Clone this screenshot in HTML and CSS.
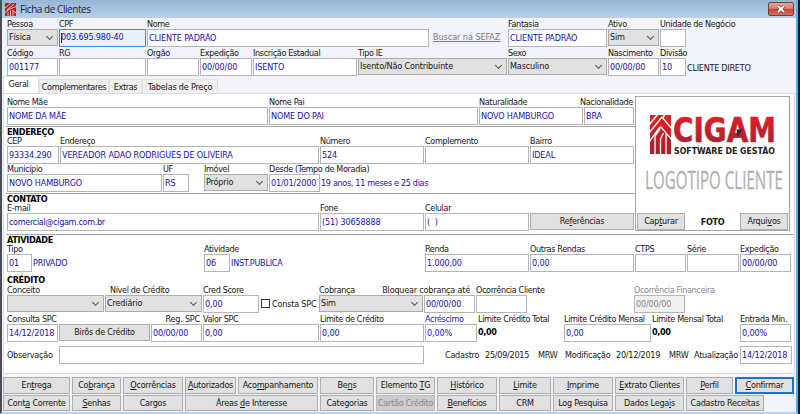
FILE: index.html
```html
<!DOCTYPE html>
<html lang="pt-BR">
<head>
<meta charset="utf-8">
<title>Ficha de Clientes</title>
<link rel="stylesheet" href="styles.css">
</head>
<body>
<div class="window">
  <header class="titlebar">
    <svg class="appicon" viewBox="0 0 11 13"><rect width="11" height="13" fill="#c5161d"/><path d="M0 5 6 0M2 7 9 1M0 9.500 4 6.500 6 5.500 11 3.500M3 13V9M5.500 13V7.500M8 13V8M7 7 11 10" fill="none" stroke="#e8d5df" stroke-width=".9"/></svg>
    <h1>Ficha de Clientes</h1>
    <button class="close" aria-label="Fechar"><svg viewBox="0 0 10 8"><path d="M2 1l6 6M8 1L2 7" stroke="#6a3a3a" stroke-width="3.200"/><path d="M2 1l6 6M8 1L2 7" stroke="#fff" stroke-width="2"/></svg></button>
  </header>

  <section class="head">
    <div class="row r-id">
      <div class="f"><label>Pessoa</label><div class="box sel">Física</div></div>
      <div class="f"><label>CPF</label><div class="box focus num"><i class="caret"></i>003.695.980-40</div></div>
      <div class="f"><label>Nome</label><div class="box up">CLIENTE PADRÃO</div></div>
      <div class="f"><label>&nbsp;</label><a class="link">Buscar na SEFAZ</a></div>
      <div class="f"><label>Fantasia</label><div class="box up">CLIENTE PADRÃO</div></div>
      <div class="f"><label>Ativo</label><div class="box sel">Sim</div></div>
      <div class="f"><label>Unidade de Negócio</label><div class="box"></div></div>
    </div>
    <div class="row r-doc">
      <div class="f"><label>Código</label><div class="box num">001177</div></div>
      <div class="f"><label>RG</label><div class="box"></div></div>
      <div class="f"><label>Orgão</label><div class="box"></div></div>
      <div class="f"><label>Expedição</label><div class="box num">00/00/00</div></div>
      <div class="f"><label>Inscrição Estadual</label><div class="box up">ISENTO</div></div>
      <div class="f"><label>Tipo IE</label><div class="box sel">Isento/Não Contribuinte</div></div>
      <div class="f"><label>Sexo</label><div class="box sel">Masculino</div></div>
      <div class="f"><label>Nascimento</label><div class="box num">00/00/00</div></div>
      <div class="f"><label>Divisão</label><div class="box num">10</div></div>
      <div class="f"><label>&nbsp;</label><div class="note dark up">CLIENTE DIRETO</div></div>
    </div>
    <nav class="tabs"><span class="tab on">Geral</span><span class="tab t2">Complementares</span><span class="tab t3">Extras</span><span class="tab t4">Tabelas de Preço</span></nav>
  </section>

  <main class="panel">
    <div class="upper">
      <div class="left">
        <div class="row r-par">
          <div class="f"><label>Nome Mãe</label><div class="box up">NOME DA MÃE</div></div>
          <div class="f"><label>Nome Pai</label><div class="box up">NOME DO PAI</div></div>
          <div class="f"><label>Naturalidade</label><div class="box up">NOVO HAMBURGO</div></div>
          <div class="f"><label class="pull">Nacionalidade</label><div class="box up">BRA</div></div>
        </div>
        <h2 class="line">ENDEREÇO</h2>
        <div class="row r-end">
          <div class="f"><label>CEP</label><div class="box num">93334.290</div></div>
          <div class="f"><label>Endereço</label><div class="box up">VEREADOR ADAO RODRIGUES DE OLIVEIRA</div></div>
          <div class="f"><label>Número</label><div class="box num">524</div></div>
          <div class="f"><label>Complemento</label><div class="box"></div></div>
          <div class="f"><label>Bairro</label><div class="box up">IDEAL</div></div>
        </div>
        <div class="row r-mun">
          <div class="f"><label>Município</label><div class="box up">NOVO HAMBURGO</div></div>
          <div class="f"><label>UF</label><div class="box up">RS</div></div>
          <span></span>
          <div class="f"><label>Imóvel</label><div class="box sel">Próprio</div></div>
          <div class="f"><label>Desde (Tempo de Moradia)</label><div class="box num">01/01/2000</div></div>
          <div class="f"><label>&nbsp;</label><div class="note mid tight">19 anos, 11 meses e 25 dias</div></div>
        </div>
        <h2 class="line">CONTATO</h2>
        <div class="row r-con">
          <div class="f"><label>E-mail</label><div class="box tight">comercial@cigam.com.br</div></div>
          <div class="f"><label>Fone</label><div class="box num">(51) 30658888</div></div>
          <div class="f"><label>Celular</label><div class="box">( &nbsp;)</div></div>
          <div class="f"><label>&nbsp;</label><button class="btn in">Re<u>f</u>erências</button></div>
        </div>
      </div>
      <aside class="photo">
        <div class="logo">
          <svg viewBox="0 0 126 92">
            <defs><linearGradient id="g" x1="0" y1="0" x2="0" y2="1"><stop offset="0" stop-color="#ee1c25"/><stop offset="1" stop-color="#9c2430"/></linearGradient></defs>
            <rect x="0" y="0" width="21" height="39" fill="url(#g)"/>
            <path d="M-1 10 8 -1M-1 18 12 2 22 14M-1 27 10 12M8 15l3-3 11 13M5 40V21M10.500 40V24M16 40V19M13 3l2-4M5 21l5-7M10.500 24l3-6" fill="none" stroke="#fff" stroke-width="1.300"/>
            <text class="brand" x="23" y="27" textLength="103" lengthAdjust="spacingAndGlyphs">CIGAM</text>
            <path d="M86.500 14.500h6l-5 7.500z" fill="#2a2a2a"/>
            <text class="sub" x="24" y="39" textLength="101" lengthAdjust="spacingAndGlyphs">SOFTWARE DE GESTÃO</text>
            <text class="client" x="-5" y="74" textLength="138" lengthAdjust="spacingAndGlyphs">LOGOTIPO CLIENTE</text>
          </svg>
        </div>
        <div class="photobar"><button class="btn in">Cap<u>t</u>urar</button><b>FOTO</b><button class="btn in">Arqui<u>v</u>os</button></div>
      </aside>
    </div>

    <h2 class="line">ATIVIDADE</h2>
    <div class="row r-ati">
      <div class="f"><label>Tipo</label><div class="box num">01</div></div>
      <div class="f"><label>&nbsp;</label><div class="note mid up">PRIVADO</div></div>
      <div class="f"><label>Atividade</label><div class="box num">06</div></div>
      <div class="f"><label>&nbsp;</label><div class="note mid up">INST.PUBLICA</div></div>
      <div class="f"><label>Renda</label><div class="box num">1.000,00</div></div>
      <div class="f"><label>Outras Rendas</label><div class="box num">0,00</div></div>
      <div class="f"><label>CTPS</label><div class="box"></div></div>
      <div class="f"><label>Série</label><div class="box"></div></div>
      <div class="f"><label>Expedição</label><div class="box num">00/00/00</div></div>
    </div>
    <h2 class="plain">CRÉDITO</h2>
    <div class="row r-cre">
      <div class="f"><label>Conceito</label><div class="box sel"></div></div>
      <div class="f"><label class="ind">Nível de Crédito</label><div class="box sel">Crediário</div></div>
      <div class="f"><label>Cred Score</label><div class="box num">0,00</div></div>
      <div class="f"><label>&nbsp;</label><div class="check"><i></i>Consta SPC</div></div>
      <div class="f"><label>Cobrança</label><div class="box sel">Sim</div></div>
      <div class="f"><label class="end">Bloquear cobrança até</label><div class="box num">00/00/00</div></div>
      <div class="f"><label>Ocorrência Cliente</label><div class="box"></div></div>
      <span></span>
      <div class="f off"><label>Ocorrência Financeira</label><div class="box num">00/00/00</div></div>
    </div>
    <div class="row r-spc">
      <div class="f"><label>Consulta SPC</label><div class="box num date">14/12/2018</div></div>
      <div class="f"><label>&nbsp;</label><button class="btn in">Birôs de Crédito</button></div>
      <div class="f"><label class="end reg">Reg. SPC</label><div class="box num">00/00/00</div></div>
      <div class="f"><label>Valor SPC</label><div class="box num">0,00</div></div>
      <div class="f"><label>Limite de Crédito</label><div class="box num">0,00</div></div>
      <div class="f blue"><label>Acréscimo</label><div class="box num">0,00%</div></div>
      <div class="f"><label>Limite Crédito Total</label><b class="val">0,00</b></div>
      <div class="f"><label>Limite Crédito Mensal</label><div class="box num">0,00</div></div>
      <div class="f"><label>Limite Mensal Total</label><b class="val">0,00</b></div>
      <div class="f"><label>Entrada Mín.</label><div class="box num">0,00%</div></div>
    </div>
    <div class="obs">
      <span>Observação</span><div class="box"></div><span>Cadastro</span><span class="num">25/09/2015</span><span>MRW</span><span>Modificação</span><span class="num">20/12/2019</span><span>MRW</span><span>Atualização</span><div class="box num date">14/12/2018</div>
    </div>
  </main>

  <footer>
    <div class="btns b1">
      <button class="btn">En<u>t</u>rega</button><button class="btn">Co<u>b</u>rança</button><button class="btn"><u>O</u>corrências</button><button class="btn"><u>A</u>utorizados</button><button class="btn">Aco<u>m</u>panhamento</button><button class="btn">Be<u>n</u>s</button><button class="btn">Elemento <u>T</u>G</button><button class="btn"><u>H</u>istórico</button><button class="btn"><u>L</u>imite</button><button class="btn"><u>I</u>mprime</button><button class="btn"><u>E</u>xtrato Clientes</button><button class="btn"><u>P</u>erfil</button><button class="btn ok"><u>C</u>onfirmar</button>
    </div>
    <div class="btns b2">
      <button class="btn">Cont<u>a</u> Corrente</button><button class="btn"><u>S</u>enhas</button><button class="btn">Cargos</button><button class="btn">Áreas <u>d</u>e Interesse</button><button class="btn">Categorias</button><button class="btn dis">Cartão Crédito</button><button class="btn"><u>B</u>enefícios</button><button class="btn">CRM</button><button class="btn">Log Pesquisa</button><button class="btn">Dados Lega<u>i</u>s</button><button class="btn">Cadastro Receitas</button>
    </div>
  </footer>
</div>
</body>
</html>
```

FILE: styles.css
```css
* { box-sizing: border-box; margin: 0; padding: 0; }
body {
  width: 800px; height: 414px; overflow: hidden; background: #0b1c3c;
  font: 9px/10px "DejaVu Sans Condensed", "DejaVu Sans", sans-serif; font-stretch: condensed;
  letter-spacing: -.35px; color: #161616; white-space: nowrap;
}
.window {
  width: 798px; height: 414px; background: #f2f3fa;
  border-left: 2px solid #4b4d55; border-right: 2px solid #53b4e2; border-bottom: 2px solid #b9d1ea;
}
.titlebar {
  display: flex; align-items: center; height: 18px; padding: 0 2px 0 3px;
  background: linear-gradient(#98b5d5, #b9d0e9);
}
.appicon { width: 11px; height: 13px; }
.titlebar h1 { flex: 1; margin-left: 4px; font: 10px/18px "Open Sans", "Noto Sans", sans-serif; color: #1c2430; letter-spacing: -.45px; }
.close {
  width: 26px; height: 14px; margin-top: -1px; border: 1px solid #6d4347; border-radius: 2px;
  background: linear-gradient(#e3a798, #d68171 45%, #bf4634 50%, #d1705b);
}
.close svg { display: block; width: 10px; height: 8px; margin: auto; }

.head { height: 75px; padding: 1px 0 0 5px; }
.row { display: grid; height: 28px; }
.f { margin-right: 1px; min-width: 0; }
label { display: block; height: 10px; }
.box {
  height: 18px; padding: 0 2px 0 1px; border: 1px solid #b2b5bb; background: #fff;
  line-height: 17px; color: #1a11a8; letter-spacing: -.15px; overflow: hidden;
}
.sel {
  position: relative; height: 17px; background: #e1e1e1; border-color: #adadad; color: #161616; line-height: 15px;
}
.sel::after {
  content: ""; position: absolute; right: 5px; top: 4px; width: 4px; height: 4px;
  border: solid #555; border-width: 0 1px 1px 0; transform: rotate(45deg);
}
.focus { border-color: #2f8fdd; background: #e5f1fd; line-height: 15px; }
.caret { display: inline-block; width: 1px; height: 10px; margin-right: -1px; background: #222; vertical-align: middle; }
.link { margin-left: 3px; color: #7d7d7d; line-height: 17px; letter-spacing: -.05px; text-decoration: underline; }
.note { line-height: 21px; letter-spacing: -.25px; }
.mid { line-height: 18px; color: #1a11a8; }
.tight { letter-spacing: -.33px; }
.date { padding: 0 0 0 1px; }
.val { line-height: 17px; color: #000; }
.r-id { grid-template-columns: 52px 88px 283px 78px 100px 52px 27px; }
.r-doc { grid-template-columns: 52px 88px 53px 53px 105px 150px 100px 52px 27px 80px; margin-top: 1px; }

.tabs { display: flex; align-items: flex-end; height: 17px; margin-left: -4px; }
.tab { height: 14px; border: 1px solid #e0e0e0; border-bottom: 0; background: #f0f0f0; text-align: center; line-height: 14px; }
.on { width: 36px; height: 17px; padding-right: 5px; background: #fff; }
.t2 { width: 70px; }
.t3 { width: 33px; }
.t4 { width: 76px; letter-spacing: -.2px; }

.panel { height: 281px; margin: 0 1px 0 1px; padding: 0 0 0 3px; background: #fff; border: 1px solid #dcdde2; }
.upper { display: flex; height: 140px; }
.left { width: 628px; padding-top: 3px; }
h2 { height: 10px; font-size: 9px; line-height: 11px; font-weight: bold; letter-spacing: -.3px; color: #000; }
.line { margin: 0 0 0 -1px; padding-left: 1px; border-top: 1px solid #a7a7a7; }
.left .line { margin-top: 1px; }
.plain { margin-top: 3px; line-height: 11px; }
.r-par { grid-template-columns: 262px 210px 105px 51px; }
.pull { margin-left: -4px; }
.r-end { grid-template-columns: 53px 260px 105px 105px 105px; }
.r-mun { grid-template-columns: 156px 27px 14px 65px 52px 120px; }
.r-con { grid-template-columns: 313px 105px 105px 105px; }
.photo { width: 155px; height: 135px; margin-top: 2px; border: 1px solid #a7a7a7; display: flex; flex-direction: column; }
.logo { flex: 1; padding: 18px 0 0 14px; }
.logo svg { display: block; width: 126px; height: 92px; overflow: visible; }
.brand { font: bold 34px "DejaVu Sans", sans-serif; letter-spacing: 0; fill: url(#g); stroke: url(#g); stroke-width: .6px; }
.sub { font: bold 8.500px "DejaVu Sans", sans-serif; letter-spacing: 0; fill: #222; }
.client { font: 25px "Open Sans", sans-serif; letter-spacing: 0; fill: #b0b0b0; stroke: #b0b0b0; stroke-width: .3px; }
.photobar { display: flex; justify-content: space-between; align-items: center; padding: 0 1px; }
.photobar .btn { width: 48px; }
.r-ati { grid-template-columns: 26px 171px 27px 194px 105px 105px 52px 53px 52px; }
.r-cre { grid-template-columns: 98px 98px 57px 59px 105px 52px 52px 106px 52px; height: 28.500px; }
.r-spc { grid-template-columns: 52px 92px 52px 117px 105px 53px 86px 88px 88px 52px; }
.ind { padding-left: 5px; }
.end { display: flex; justify-content: flex-end; padding-right: 5px; letter-spacing: -.2px; }
.reg { padding-right: 2px; }
.check { display: flex; align-items: center; height: 17px; gap: 2px; padding-left: 1px; letter-spacing: -.2px; }
.check i { width: 9px; height: 9px; border: 1px solid #333; }
.off { color: #888; }
.off .box { background: #f0f0f0; color: #888; }
.blue, .blue .box { color: #1414ff; }
.obs { display: grid; grid-template-columns: 52px 386px 40px 53px 27px 51px 53px 25px 46px 52px; line-height: 18px; margin-top: 4px; letter-spacing: -.25px; }
.obs div:nth-child(2) { width: 365px; }

.btn {
  height: 17px; border: 1px solid #adadad; background: #e1e1e1; font: inherit; letter-spacing: -.25px; color: #161616;
  line-height: 15px; text-align: center; white-space: nowrap;
}
.in { width: 100%; height: 17px; }
footer { padding: 3px 0 0 1px; }
.btns { display: grid; column-gap: 2px; margin-bottom: 1px; }
.b1 { grid-template-columns: 67px 49px 60px 51px 80px 54px 59px 60px 52px 60px 69px 47px 59px; }
.b2 { grid-template-columns: 67px 49px 60px 133px 54px 59px 60px 52px 60px 69px 78px; }
.b2 .btn { height: 16px; line-height: 14px; }
.ok { border: 1px solid #1a73cf; outline: 1px solid #1a73cf; outline-offset: -2px; }
.dis { background: #ccc; border-color: #bbb; color: #888; }
```
